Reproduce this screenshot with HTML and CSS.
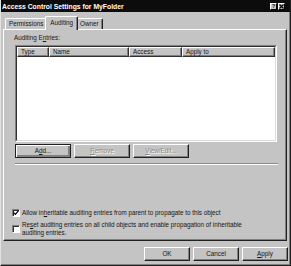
FILE: index.html
```html
<!DOCTYPE html>
<html>
<head>
    <title>Access Control Settings for MyFolder</title>
    <link rel="stylesheet" href="styles.css">
</head>
<body>
    <div class="window">
        <div class="titlebar">
            <span class="title">Access Control Settings for MyFolder</span>
            <span class="caption-btns">
                <span class="cbtn">?</span>
                <span class="cbtn">
                    <svg width="5" height="5" viewBox="0 0 5 5"><path d="M0.5 0.5 L4.5 4.5 M4.5 0.5 L0.5 4.5" stroke="#000" stroke-width="1.2"/></svg>
                </span>
            </span>
        </div>
        <div class="tabs">
            <div class="tab">Permissions</div>
            <div class="tab active">Auditing</div>
            <div class="tab">Owner</div>
        </div>
        <div class="panel">
            <div class="label">Auditing E<u>n</u>tries:</div>
            <div class="list">
                <div class="list-inner">
                    <div class="list-head">
                        <div class="col c-type">Type</div>
                        <div class="col c-name">Name</div>
                        <div class="col c-access">Access</div>
                        <div class="col c-apply">Apply to</div>
                    </div>
                </div>
            </div>
            <div class="list-btns">
                <div class="btn focus">A<u>d</u>d...</div>
                <div class="btn disabled"><u>R</u>emove</div>
                <div class="btn disabled"><u>V</u>iew/Edit...</div>
            </div>
            <div class="sep"></div>
            <div class="spacer"></div>
            <div class="checks">
                <div class="check">
                    <span class="box">
                        <svg width="6" height="6" viewBox="0 0 6 6"><path d="M0.6 2.6 L2.3 4.4 L5.4 0.9" fill="none" stroke="#000" stroke-width="1.3"/></svg>
                    </span>
                    <span class="check-text">Allow in<u>h</u>eritable auditing entries from parent to propagate to this object</span>
                </div>
                <div class="check">
                    <span class="box"></span>
                    <span class="check-text">Re<u>s</u>et auditing entries on all child objects and enable propagation of inheritable auditing entries.</span>
                </div>
            </div>
        </div>
        <div class="footer">
            <div class="btn">OK</div>
            <div class="btn">Cancel</div>
            <div class="btn"><u>A</u>pply</div>
        </div>
    </div>
</body>
</html>
```

FILE: styles.css
```css
body {
    margin: 0;
    padding: 0;
    background-color: #c4c4c4;
    font-family: 'Liberation Sans', Arial, sans-serif;
    font-size: 6.3px;
    color: #151515;
}
.window {
    width: 291px;
    height: 266px;
    box-sizing: border-box;
    background-color: #c4c4c4;
    border-left: 1px solid #e2e2e2;
    border-right: 1px solid #202020;
    border-bottom: 1px solid #202020;
    box-shadow: inset -1px -1px #808080;
    display: flex;
    flex-direction: column;
}
.titlebar {
    height: 12px;
    background-color: #0c0c0c;
    color: #ffffff;
    display: flex;
    align-items: center;
    justify-content: space-between;
    padding: 0 5px 0 1px;
}
.title {
    font-weight: bold;
    font-size: 6.8px;
}
.caption-btns {
    display: flex;
    gap: 1px;
}
.cbtn {
    width: 7px;
    height: 7px;
    box-sizing: border-box;
    background-color: #c4c4c4;
    border: 1px solid;
    border-color: #ffffff #000000 #000000 #ffffff;
    color: #000000;
    font-weight: bold;
    font-size: 5px;
    line-height: 5px;
    display: flex;
    align-items: center;
    justify-content: center;
}
.tabs {
    display: flex;
    align-items: flex-end;
    height: 13px;
    margin-top: 4px;
    padding-left: 4px;
}
.tab {
    height: 11px;
    box-sizing: border-box;
    padding: 0 3px;
    line-height: 9px;
    border-top: 1px solid #ffffff;
    border-left: 1px solid #ffffff;
    border-right: 1px solid #202020;
    border-radius: 2px 2px 0 0;
    box-shadow: inset -1px 0 #808080;
}
.tab.active {
    height: 14px;
    margin: 0 -2px -1px -2px;
    padding: 0 4px;
    line-height: 11px;
    position: relative;
    z-index: 1;
    background-color: #c4c4c4;
}
.panel {
    width: 284px;
    height: 212px;
    box-sizing: border-box;
    margin-left: 2px;
    border: 1px solid;
    border-color: #ffffff #202020 #202020 #ffffff;
    box-shadow: inset -1px -1px #808080;
    padding: 4px 0 0 10px;
    display: flex;
    flex-direction: column;
}
.label {
    line-height: 8px;
    margin-bottom: 3px;
}
.list {
    width: 262px;
    height: 97px;
    box-sizing: border-box;
    margin-left: 1px;
    border: 1px solid;
    border-color: #808080 #ffffff #ffffff #808080;
}
.list-inner {
    height: 100%;
    box-sizing: border-box;
    border: 1px solid;
    border-color: #303030 #dcdcdc #dcdcdc #303030;
    background-color: #ffffff;
}
.list-head {
    display: flex;
    height: 10px;
}
.col {
    box-sizing: border-box;
    background-color: #c4c4c4;
    border: 1px solid;
    border-color: #ffffff #303030 #303030 #ffffff;
    box-shadow: inset -1px -1px #808080;
    padding-left: 3px;
    line-height: 8px;
}
.c-type {
    width: 32px;
}
.c-name {
    width: 80px;
}
.c-access {
    width: 53px;
}
.c-apply {
    flex: 1;
}
.list-btns {
    display: flex;
    gap: 3px;
    margin-top: 2px;
    margin-left: 1px;
}
.btn {
    width: 56px;
    height: 14px;
    box-sizing: border-box;
    border: 1px solid;
    border-color: #ffffff #202020 #202020 #ffffff;
    box-shadow: inset -1px -1px #808080;
    text-align: center;
    line-height: 12px;
}
.btn.focus {
    border-color: #202020;
    box-shadow: inset 1px 1px #ffffff, inset -2px -2px #808080;
}
.btn.disabled {
    color: #8a8a8a;
    text-shadow: 1px 1px #ffffff;
}
.sep {
    width: 263px;
    height: 2px;
    box-sizing: border-box;
    margin-top: 5px;
    margin-left: 1px;
    border-top: 1px solid #8a8a8a;
    border-bottom: 1px solid #ffffff;
}
.spacer {
    flex: 1;
}
.checks {
    display: flex;
    flex-direction: column;
    gap: 4px;
    padding-bottom: 3px;
}
.check {
    display: flex;
    align-items: center;
    gap: 2px;
    margin-left: -2px;
}
.box {
    width: 8px;
    height: 8px;
    flex-shrink: 0;
    box-sizing: border-box;
    border: 1px solid;
    border-color: #808080 #ffffff #ffffff #808080;
    background-color: #ffffff;
    box-shadow: inset 1px 1px #303030;
    display: flex;
    align-items: center;
    justify-content: center;
}
.check-text {
    line-height: 8px;
    width: 228px;
}
.footer {
    display: flex;
    justify-content: flex-end;
    gap: 3px;
    margin-top: 6px;
    padding-right: 2px;
}
.footer .btn {
    width: 46px;
}
```
